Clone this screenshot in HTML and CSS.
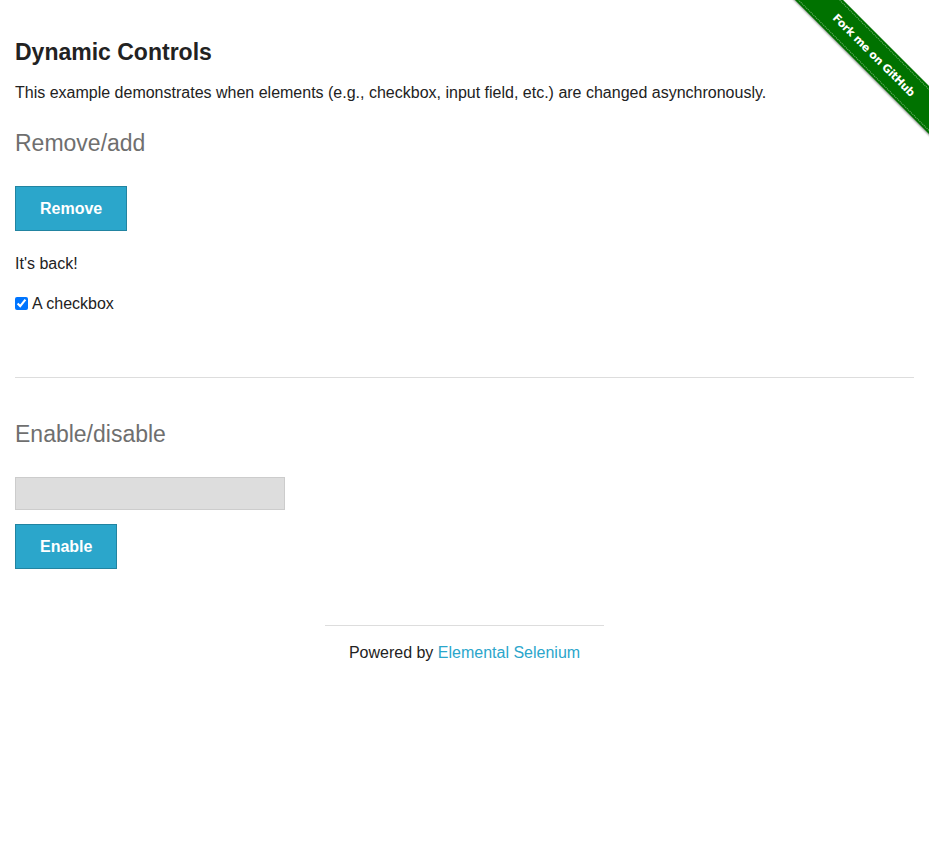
FILE: index.html
```html
<!DOCTYPE html>
<html lang="en">
<head>
<meta charset="utf-8">
<title>The Internet</title>
<link rel="stylesheet" href="styles.css">
</head>
<body>
<a class="ribbon" href="#"><span class="ribbon-band"><span class="ribbon-text">Fork me on GitHub</span></span></a>
<div class="page">
  <h3 class="title">Dynamic Controls</h3>
  <p class="intro">This example demonstrates when elements (e.g., checkbox, input field, etc.) are changed asynchronously.</p>
  <h4 class="subtitle">Remove/add</h4>
  <button class="btn btn-remove" type="button">Remove</button>
  <p class="message">It's back!</p>
  <label class="check-row"><input type="checkbox" checked class="check">A checkbox</label>
  <hr class="divider">
  <h4 class="subtitle subtitle-second">Enable/disable</h4>
  <input class="text-field" type="text" disabled>
  <button class="btn btn-enable" type="button">Enable</button>
</div>
<footer class="footer">
  <hr class="footer-rule">
  <div class="footer-text">Powered by <a href="#" class="footer-link">Elemental Selenium</a></div>
</footer>
</body>
</html>
```
FILE: styles.css
```css
html, body {
  margin: 0;
  padding: 0;
  background: #fff;
}
body {
  font-family: "Liberation Sans", Arial, sans-serif;
  font-size: 16px;
  line-height: 24px;
  color: #222;
  position: relative;
}
.page {
  padding: 39px 15px 0;
  display: flex;
  flex-direction: column;
  align-items: flex-start;
}
.title {
  margin: 0;
  font-size: 23px;
  line-height: 27.6px;
  font-weight: bold;
  color: #222;
}
.intro {
  margin: 14px 0 0;
}
.subtitle {
  margin: 25.5px 0 0;
  font-size: 23px;
  line-height: 27.6px;
  font-weight: normal;
  color: #6f6f6f;
}
.btn {
  margin: 28.4px 0 0;
  height: 45px;
  box-sizing: border-box;
  background: #2ba6cb;
  border: 1px solid #2284a1;
  color: #fff;
  font-family: "Liberation Sans", Arial, sans-serif;
  font-size: 16px;
  font-weight: bold;
  padding: 0 24px;
  cursor: pointer;
}
.btn-remove {
  width: 112px;
}
.message {
  margin: 20.5px 0 0;
}
.check-row {
  margin-top: 16px;
  display: flex;
  align-items: center;
}
.check {
  margin: 0 4px 0 0;
  width: 13px;
  height: 13px;
}
.divider {
  align-self: stretch;
  margin: 61px 0 0;
  border: 0;
  border-top: 1px solid #ddd;
  height: 0;
}
.subtitle-second {
  margin-top: 43px;
}
.text-field {
  margin: 28.4px 0 0;
  width: 270px;
  height: 33px;
  box-sizing: border-box;
  background: #ddd;
  border: 1px solid #ccc;
}
.btn-enable {
  margin-top: 14px;
  width: 102px;
  padding-top: 1px;
}
.footer {
  display: flex;
  flex-direction: column;
  align-items: center;
  margin-top: 56px;
}
.footer-rule {
  width: 279px;
  margin: 0;
  border: 0;
  border-top: 1px solid #ddd;
  height: 0;
}
.footer-text {
  margin-top: 15px;
  text-align: center;
}
.footer-link {
  color: #2ba6cb;
  text-decoration: none;
}
.ribbon {
  position: absolute;
  top: 0;
  right: 0;
  width: 149px;
  height: 149px;
  overflow: hidden;
  text-decoration: none;
}
.ribbon-band {
  position: absolute;
  left: -16px;
  top: 38px;
  width: 220px;
  height: 34px;
  background: #007200;
  transform: rotate(45deg);
  display: flex;
  align-items: center;
  justify-content: center;
  box-shadow: 0 1px 2px rgba(0,0,0,0.4);
}
.ribbon-band::before,
.ribbon-band::after {
  content: "";
  position: absolute;
  left: 0;
  right: 0;
  height: 0;
  border-top: 1px dotted rgba(255,255,255,0.45);
}
.ribbon-band::before { top: 2px; }
.ribbon-band::after { bottom: 2px; }
.ribbon-text {
  color: #fff;
  font-family: "DejaVu Sans", sans-serif;
  font-size: 11px;
  font-weight: bold;
  letter-spacing: -0.3px;
  padding-top: 1px;
}
```
